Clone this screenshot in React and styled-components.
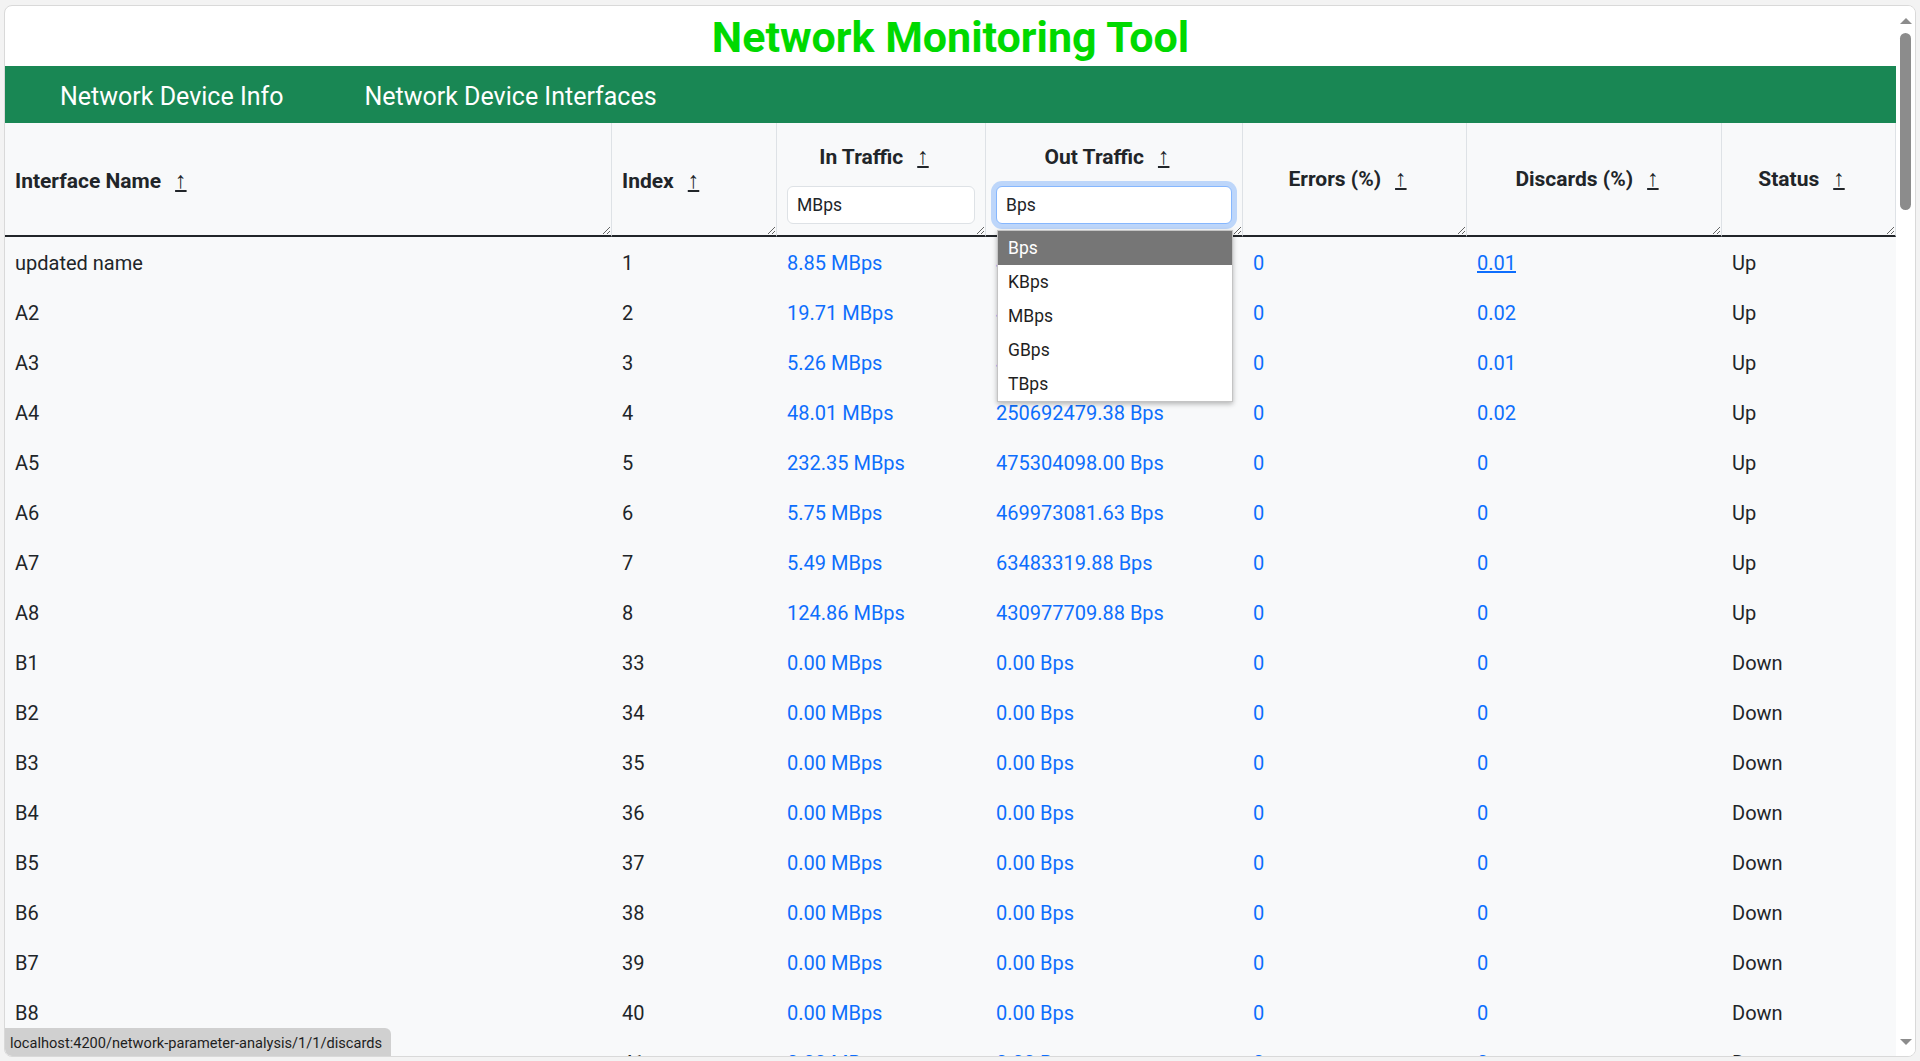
import React from "react";
import styled, { createGlobalStyle } from "styled-components";

const GlobalStyle = createGlobalStyle`
  * { box-sizing: border-box; }
  html, body { margin: 0; padding: 0; height: 100%; }
  body {
    background: #f3f3f3;
    font-family: "Segoe UI", Roboto, "Noto Sans", "Liberation Sans", sans-serif;
    color: #212529;
    overflow: hidden;
  }
`;

const columns = [
  { key: "name", label: "Interface Name", width: 607, align: "left" },
  { key: "index", label: "Index", width: 165, align: "left" },
  { key: "in", label: "In Traffic", width: 209, align: "center", unit: "MBps" },
  { key: "out", label: "Out Traffic", width: 257, align: "center", unit: "Bps", open: true },
  { key: "errors", label: "Errors (%)", width: 224, align: "center" },
  { key: "discards", label: "Discards (%)", width: 255, align: "center" },
  { key: "status", label: "Status", width: 174, align: "center" },
];

const units = ["Bps", "KBps", "MBps", "GBps", "TBps"];

const rows = [
  ["updated name", 1, "8.85 MBps", "45102387.25 Bps", "0", "0.01", "Up"],
  ["A2", 2, "19.71 MBps", "41893020.50 Bps", "0", "0.02", "Up"],
  ["A3", 3, "5.26 MBps", "47220918.13 Bps", "0", "0.01", "Up"],
  ["A4", 4, "48.01 MBps", "250692479.38 Bps", "0", "0.02", "Up"],
  ["A5", 5, "232.35 MBps", "475304098.00 Bps", "0", "0", "Up"],
  ["A6", 6, "5.75 MBps", "469973081.63 Bps", "0", "0", "Up"],
  ["A7", 7, "5.49 MBps", "63483319.88 Bps", "0", "0", "Up"],
  ["A8", 8, "124.86 MBps", "430977709.88 Bps", "0", "0", "Up"],
  ["B1", 33, "0.00 MBps", "0.00 Bps", "0", "0", "Down"],
  ["B2", 34, "0.00 MBps", "0.00 Bps", "0", "0", "Down"],
  ["B3", 35, "0.00 MBps", "0.00 Bps", "0", "0", "Down"],
  ["B4", 36, "0.00 MBps", "0.00 Bps", "0", "0", "Down"],
  ["B5", 37, "0.00 MBps", "0.00 Bps", "0", "0", "Down"],
  ["B6", 38, "0.00 MBps", "0.00 Bps", "0", "0", "Down"],
  ["B7", 39, "0.00 MBps", "0.00 Bps", "0", "0", "Down"],
  ["B8", 40, "0.00 MBps", "0.00 Bps", "0", "0", "Down"],
  ["B9", 41, "0.00 MBps", "0.00 Bps", "0", "0", "Down"],
];

export default function App() {
  return (
    <>
      <GlobalStyle />
      <Window>
        <Main>
          <Title>Network Monitoring Tool</Title>
          <NavBar>
            <NavLink href="#">Network Device Info</NavLink>
            <NavLink href="#">Network Device Interfaces</NavLink>
          </NavBar>
          <Table>
            <colgroup>
              {columns.map((c) => (
                <col key={c.key} style={{ width: c.width }} />
              ))}
            </colgroup>
            <thead>
              <tr>
                {columns.map((c) => (
                  <Th key={c.key}>
                    <HeadInner $align={c.align} $stacked={!!c.unit}>
                      <HeadLabel>
                        {c.label}
                        <SortLink href="#">↑</SortLink>
                      </HeadLabel>
                      {c.unit && (
                        <UnitSelect defaultValue={c.unit} $focused={c.open}>
                          {units.map((u) => (
                            <option key={u}>{u}</option>
                          ))}
                        </UnitSelect>
                      )}
                    </HeadInner>
                    {c.open && (
                      <OptionList>
                        {units.map((u) => (
                          <OptionItem key={u} $selected={u === c.unit}>
                            {u}
                          </OptionItem>
                        ))}
                      </OptionList>
                    )}
                  </Th>
                ))}
              </tr>
            </thead>
            <tbody>
              {rows.map((r, i) => (
                <tr key={r[0]}>
                  <Td>{r[0]}</Td>
                  <Td>{r[1]}</Td>
                  <Td><CellLink href="#">{r[2]}</CellLink></Td>
                  <Td><CellLink href="#">{r[3]}</CellLink></Td>
                  <Td><CellLink href="#">{r[4]}</CellLink></Td>
                  <Td><CellLink href="#" $hover={i === 0}>{r[5]}</CellLink></Td>
                  <Td>{r[6]}</Td>
                </tr>
              ))}
            </tbody>
          </Table>
        </Main>
        <ScrollTrack>
          <ArrowUp />
          <Thumb />
          <Spacer />
          <ArrowDown />
        </ScrollTrack>
        <StatusBar>localhost:4200/network-parameter-analysis/1/1/discards</StatusBar>
      </Window>
    </>
  );
}

const Window = styled.div`
  position: relative;
  display: flex;
  margin: 5px 4px 0 4px;
  height: 1052px;
  background: #fff;
  border: 1px solid #d9d9d9;
  border-radius: 8px;
  overflow: hidden;
`;

const Main = styled.div`
  flex: 1;
  min-width: 0;
  overflow: hidden;
`;

const Title = styled.h1`
  margin: 0;
  height: 60px;
  padding-top: 3px;
  line-height: 57px;
  text-align: center;
  font-size: 43px;
  font-weight: 700;
  color: #00d900;
`;

const NavBar = styled.nav`
  display: flex;
  align-items: center;
  gap: 81px;
  height: 57px;
  padding: 3px 0 0 55px;
  background: #198754;
`;

const NavLink = styled.a`
  color: #fff;
  font-size: 25px;
  text-decoration: none;
`;

const Table = styled.table`
  width: 100%;
  table-layout: fixed;
  border-collapse: separate;
  border-spacing: 0;
`;

const Th = styled.th`
  position: relative;
  padding: 0;
  background: #f8f9fa;
  border-right: 1px solid #dee2e6;
  border-bottom: 2px solid #212529;
  vertical-align: top;
`;

const HeadInner = styled.div`
  height: 112px;
  resize: horizontal;
  overflow: hidden;
  display: flex;
  flex-direction: column;
  justify-content: center;
  align-items: ${(p) => (p.$align === "left" ? "flex-start" : "center")};
  gap: 14px;
  padding: ${(p) =>
    p.$stacked ? "7px 10px 0" : p.$align === "left" ? "2px 10px 0" : "0 10px 2px"};
`;

const HeadLabel = styled.div`
  font-size: 21px;
  font-weight: 700;
  line-height: 30px;
  white-space: nowrap;
`;

const SortLink = styled.a`
  margin: 0 14px;
  font-family: "Liberation Sans", "DejaVu Sans", sans-serif;
  font-size: 23px;
  font-weight: 400;
  color: #212529;
  text-decoration: underline;
`;

const UnitSelect = styled.select`
  appearance: none;
  align-self: stretch;
  height: 38px;
  padding: 0 9px;
  font-family: inherit;
  font-size: 17.5px;
  color: #212529;
  background: #fff;
  border: 1px solid ${(p) => (p.$focused ? "#86b7fe" : "#dee2e6")};
  border-radius: 6px;
  box-shadow: ${(p) => (p.$focused ? "0 0 0 5px rgba(13, 110, 253, 0.25)" : "none")};
  outline: none;
`;

const OptionList = styled.ul`
  position: absolute;
  top: 107px;
  left: 11px;
  z-index: 5;
  width: 236px;
  margin: 0;
  padding: 0;
  list-style: none;
  text-align: left;
  background: #fff;
  border: 1px solid #c4c4c4;
  box-shadow: 0 2px 5px rgba(0, 0, 0, 0.28);
`;

const OptionItem = styled.li`
  height: 34px;
  line-height: 34px;
  padding-left: 10px;
  font-size: 17.5px;
  font-weight: 400;
  color: ${(p) => (p.$selected ? "#fff" : "#1f1f1f")};
  background: ${(p) => (p.$selected ? "#767676" : "transparent")};
`;

const Td = styled.td`
  padding: 11px 10px 9px;
  font-size: 20px;
  line-height: 30px;
  background: #f8f9fa;
  white-space: nowrap;
  overflow: hidden;
`;

const CellLink = styled.a`
  color: #0d6efd;
  text-decoration: ${(p) => (p.$hover ? "underline" : "none")};
`;

const ScrollTrack = styled.div`
  flex: none;
  width: 19px;
  display: flex;
  flex-direction: column;
  align-items: center;
  padding: 12px 0 11px;
  background: #fff;
`;

const ArrowUp = styled.div`
  width: 0;
  height: 0;
  border-left: 6.5px solid transparent;
  border-right: 6.5px solid transparent;
  border-bottom: 6px solid #8c8c8c;
`;

const ArrowDown = styled(ArrowUp)`
  border-bottom: none;
  border-top: 6px solid #8c8c8c;
`;

const Thumb = styled.div`
  width: 11px;
  height: 177px;
  margin-top: 9px;
  border-radius: 6px;
  background: #8c8c8c;
`;

const Spacer = styled.div`
  flex: 1;
`;

const StatusBar = styled.div`
  position: absolute;
  left: 0;
  bottom: 0;
  z-index: 10;
  height: 28px;
  padding: 3px 9px 0 5px;
  line-height: 25px;
  font-size: 14.6px;
  color: #1e1e1e;
  background: #d0d0d0;
  border-top-right-radius: 6px;
`;
